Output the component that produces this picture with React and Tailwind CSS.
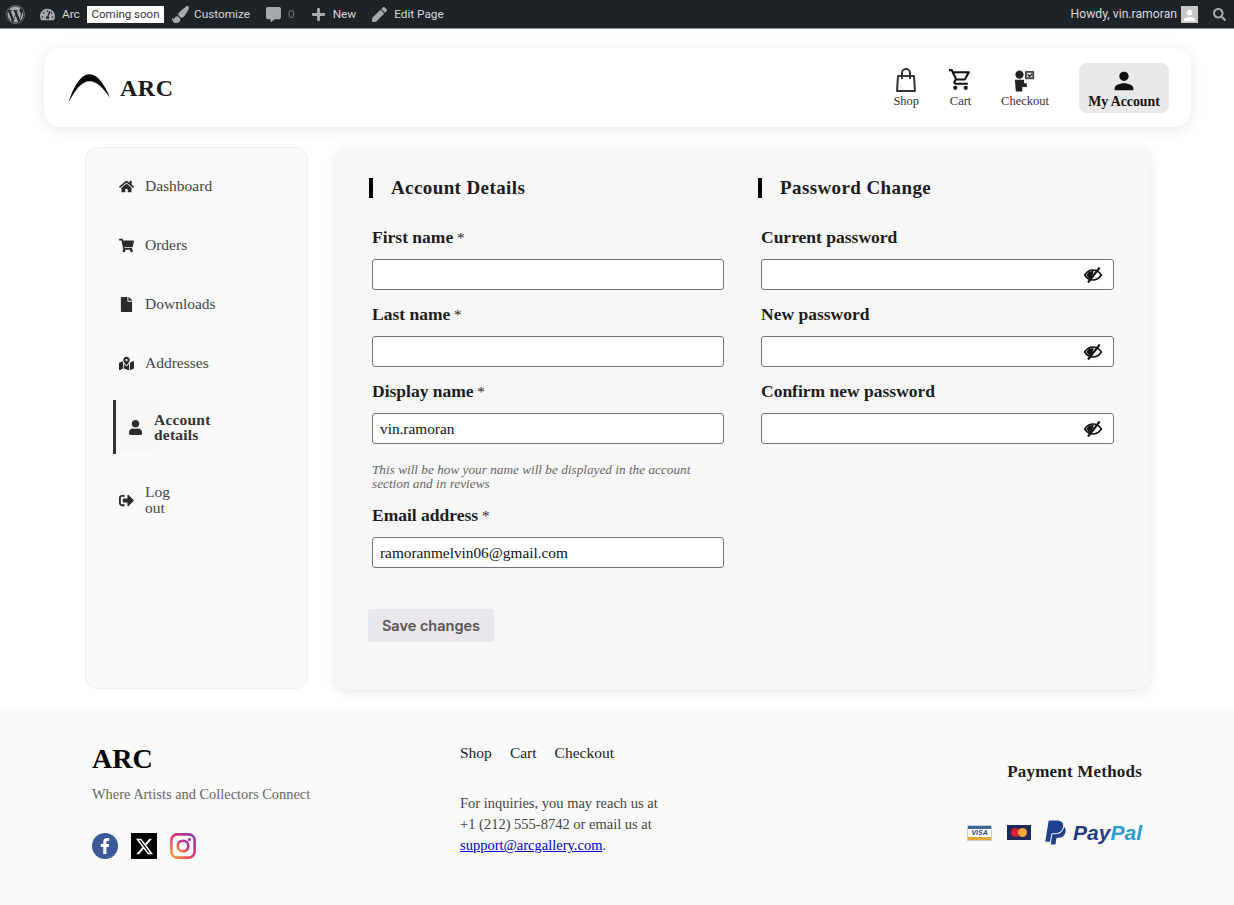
import React from "react";
import { FaWordpress, FaTachometerAlt, FaPaintBrush, FaCommentAlt, FaPlus, FaPen, FaSearch, FaHome, FaShoppingCart, FaFile, FaMapMarkedAlt, FaUser, FaSignOutAlt, FaFacebookF, FaPaypal } from "react-icons/fa";
import { FaXTwitter } from "react-icons/fa6";
import { MdPerson, MdOutlineShoppingCart } from "react-icons/md";

const serif = "font-['Liberation_Serif',serif]";

function BagIcon() {
  return (
    <svg viewBox="0 0 20 24" className="w-[20px] h-[24px]" fill="none" stroke="#333" strokeWidth="2">
      <path d="M2 8h16l1 15H1z" strokeLinejoin="round" />
      <path d="M6 11V5a4 4 0 0 1 8 0v6" />
    </svg>
  );
}

function CheckoutIcon() {
  return (
    <svg viewBox="0 0 24 24" className="w-[22px] h-[22px]" fill="#222">
      <circle cx="6" cy="5" r="4.5" />
      <path d="M1 10.5h10v4h3v4H9v5H2z" />
      <rect x="12" y="1" width="10" height="9" rx="1" fill="#444" />
      <rect x="14" y="3" width="6" height="5" fill="#ddd" />
      <path d="M15 5l2 2 3-3" fill="none" stroke="#222" strokeWidth="1.5" />
    </svg>
  );
}

function EyeOff() {
  return (
    <svg viewBox="0 0 24 24" className="w-[20px] h-[20px]" fill="none" stroke="#111" strokeWidth="2">
      <path d="M2 12s4-6 10-6 10 6 10 6-4 6-10 6S2 12 2 12z" />
      <path d="M7 8l-3 4 3 4 3 1 3-10z" fill="#111" stroke="none" />
      <path d="M20 3L6 21" strokeWidth="2.5" />
    </svg>
  );
}

function AdminItem({ icon, children }) {
  return (
    <div className="flex items-center gap-[7px] text-[#d8dadc]">
      <span className="text-[#a7aaad] text-[15px]">{icon}</span>
      {children}
    </div>
  );
}

function AdminBar() {
  return (
    <div className="h-[29px] pt-[1px] bg-[#1d2327] border-b border-[#8a8d90] flex items-center justify-between pl-[6px] pr-[8px] text-[11.8px] font-['Roboto',sans-serif]">
      <div className="flex items-center">
        <FaWordpress className="text-[#a7aaad] text-[19px] mr-[15px]" />
        <FaTachometerAlt className="text-[#a7aaad] text-[15px] mr-[7px]" />
        <span className="text-[#d8dadc] mr-[7px] w-[18px]">Arc</span>
        <span className="bg-white text-[#333] w-[77px] text-center h-[17px] leading-[17px] mr-[8px] text-[11.5px]">Coming soon</span>
        <div className="flex items-center gap-[16px]">
          <AdminItem icon={<FaPaintBrush className="text-[17px] -mr-[2px]" />}>Customize</AdminItem>
          <AdminItem icon={<FaCommentAlt />}><span className="text-[#72777c]">0</span></AdminItem>
          <AdminItem icon={<FaPlus />}>New</AdminItem>
          <AdminItem icon={<FaPen />}>Edit Page</AdminItem>
        </div>
      </div>
      <div className="flex items-center text-[#d8dadc]">
        <span className="mr-[4px] text-[12.2px]">Howdy, vin.ramoran</span>
        <span className="w-[17px] h-[17px] bg-[#c7c7c7] mr-[15px] flex items-end justify-center overflow-hidden">
          <MdPerson className="text-white text-[19px] -mb-[2px]" />
        </span>
        <FaSearch className="text-[#a7aaad] text-[13px]" />
      </div>
    </div>
  );
}

function NavItem({ icon, label, active }) {
  return (
    <div className={`flex flex-col items-center justify-center rounded-lg ${active ? "bg-[#e9e9e9] w-[90px] h-[50px] font-bold text-[13.8px] text-[#111]" : "text-[#333] text-[12.5px]"}`}>
      <div className="h-[26px] flex items-end justify-center">{icon}</div>
      <div className="leading-[17px] mt-[1px]">{label}</div>
    </div>
  );
}

function Header() {
  return (
    <div className="mx-[44px] mt-[19px] w-[1147px] h-[79px] bg-white rounded-2xl shadow-[0_2px_14px_rgba(0,0,0,0.1)] flex items-center justify-between pl-[24px] pr-[22px]">
      <div className="flex items-center gap-[9px]">
        <svg viewBox="0 0 44 30" className="w-[43px] h-[30px] mt-[1px]">
          <path d="M1 29C5 15 13 1 22 1c9 0 16 12 21 24C36 15 30 8 22 8 14 8 8 16 1 29z" fill="#000" />
        </svg>
        <span className="text-[24px] font-bold text-[#1a1a1a] tracking-[0.5px]">ARC</span>
      </div>
      <div className="flex items-center">
        <div className="mr-[29px]"><NavItem icon={<BagIcon />} label="Shop" /></div>
        <div className="mr-[28px]"><NavItem icon={<MdOutlineShoppingCart className="text-[25px] text-[#111]" />} label="Cart" /></div>
        <div className="mr-[30px]"><NavItem icon={<CheckoutIcon />} label="Checkout" /></div>
        <NavItem icon={<MdPerson className="text-[28px] text-[#111] -mb-[3px]" />} label="My Account" active />
      </div>
    </div>
  );
}

function SideLink({ icon, children }) {
  return (
    <div className="flex items-center pl-[33px] text-[#444] text-[15.5px] leading-[16px]">
      <span className="w-[26px] text-[15px] text-[#2b2b2b] flex">{icon}</span>
      <span>{children}</span>
    </div>
  );
}

function Sidebar() {
  return (
    <div className="w-[223px] h-[542px] bg-[#fafafa] border border-[#efefef] rounded-xl pt-[30px] shrink-0">
      <div className="flex flex-col gap-[43px]">
        <SideLink icon={<FaHome />}>Dashboard</SideLink>
        <SideLink icon={<FaShoppingCart />}>Orders</SideLink>
        <SideLink icon={<FaFile />}>Downloads</SideLink>
        <SideLink icon={<FaMapMarkedAlt />}>Addresses</SideLink>
      </div>
      <div className="ml-[27px] mt-[29px] h-[54px] w-[46px] border-l-[3px] border-[#333] bg-[#f7f7f7] flex items-center relative">
        <FaUser className="text-[15px] text-[#2b2b2b] ml-[12px] shrink-0" />
        <span className="absolute left-[38px] font-bold text-[#333] text-[15.5px] leading-[15px] tracking-[0.2px]">Account<br />details</span>
      </div>
      <div className="mt-[30px]">
        <SideLink icon={<FaSignOutAlt />}>Log<br />out</SideLink>
      </div>
    </div>
  );
}

function Field({ label, required, value, eye, hint }) {
  return (
    <div>
      <div className="text-[17.5px] font-bold text-[#1c1c1c] leading-[22px] mb-[11px] pl-[3px]">
        {label}
        {required && <span className="font-normal text-[15px] leading-none"> *</span>}
      </div>
      <div className={`ml-[3px] h-[31px] pt-[1px] bg-white border border-[#77707a] rounded-[3px] flex items-center justify-between px-[7px] text-[15.3px] text-[#111] ${eye ? "w-[353px]" : "w-[352px]"}`}>
        <span>{value}</span>
        {eye && <span className="mr-[3px]"><EyeOff /></span>}
      </div>
      {hint && <div className="pl-[3px] mt-[19px] w-[345px] text-[13.25px] italic leading-[14px] text-[#666]">{hint}</div>}
    </div>
  );
}

function Heading({ children }) {
  return (
    <div className="border-l-[4px] border-black pl-[18px] h-[20px] flex items-center text-[19px] font-bold text-[#1c1c1c] tracking-[0.4px] mb-[28px]">
      {children}
    </div>
  );
}

function Form() {
  return (
    <div className="w-[815px] h-[542px] bg-[#f7f7f7] rounded-xl shadow-[0_3px_12px_rgba(0,0,0,0.1)] ml-[27px] pl-[34px] pt-[31px]">
      <div className="flex gap-[32px]">
        <div className="w-[357px]">
          <Heading>Account Details</Heading>
          <div className="flex flex-col gap-[13px]">
            <Field label="First name" required />
            <Field label="Last name" required />
            <Field label="Display name" required value="vin.ramoran" hint="This will be how your name will be displayed in the account section and in reviews" />
            <Field label="Email address" required value="ramoranmelvin06@gmail.com" />
          </div>
          <button className="-ml-[1px] mt-[41px] w-[126px] h-[33px] bg-[#e9e6ec] rounded-[2px] text-[14.5px] font-semibold text-[#555] font-['Inter',sans-serif]">Save changes</button>
        </div>
        <div className="w-[357px]">
          <Heading>Password Change</Heading>
          <div className="flex flex-col gap-[13px]">
            <Field label="Current password" eye />
            <Field label="New password" eye />
            <Field label="Confirm new password" eye />
          </div>
        </div>
      </div>
    </div>
  );
}

function Footer() {
  return (
    <div className="mt-[19px] h-[197px] bg-[#fafafa] flex pl-[92px] pr-[92px] relative">
      <div className="w-[368px] pt-[33px]">
        <div className="text-[28px] font-bold text-black leading-[36px]">ARC</div>
        <div className="text-[14.4px] text-[#666] mt-[8px] leading-[18px]">Where Artists and Collectors Connect</div>
        <div className="flex gap-[13px] mt-[30px]">
          <span className="w-[26px] h-[26px] rounded-full bg-[#3b5998] flex items-center justify-center"><FaFacebookF className="text-[16px] text-white" /></span>
          <span className="w-[26px] h-[26px] bg-black flex items-center justify-center"><FaXTwitter className="text-[19px] text-white" /></span>
          <svg viewBox="0 32 448 448" className="w-[26px] h-[26px]">
            <defs>
              <linearGradient id="ig" x1="0" y1="1" x2="1" y2="0">
                <stop offset="0" stopColor="#f9a13b" />
                <stop offset="0.5" stopColor="#e1306c" />
                <stop offset="1" stopColor="#8a3ab9" />
              </linearGradient>
            </defs>
            <rect x="24" y="56" width="400" height="400" rx="100" fill="none" stroke="url(#ig)" strokeWidth="44" />
            <circle cx="224" cy="256" r="92" fill="none" stroke="url(#ig)" strokeWidth="44" />
            <circle cx="335" cy="145" r="28" fill="#a43ab0" />
          </svg>
        </div>
      </div>
      <div className="pt-[36px] text-[15.5px] text-[#333] w-[400px]">
        <div className="flex gap-[18px] leading-[18px] text-[#222]">
          <span>Shop</span><span>Cart</span><span>Checkout</span>
        </div>
        <div className="mt-[31px] text-[14.5px] leading-[21px] text-[#444]">
          For inquiries, you may reach us at<br />
          +1 (212) 555-8742 or email us at<br />
          <span className="text-[#0000cc] underline">support@arcgallery.com</span>.
        </div>
      </div>
      <div className="flex-1 flex flex-col items-end pt-[55px]">
        <div className="text-[17px] font-bold text-[#1c1c1c] leading-[18px] tracking-[0.2px]">Payment Methods</div>
        <div className="flex items-center mt-[38px]">
          <div className="w-[25px] h-[16px] bg-white border border-[#ccc] flex flex-col mr-[15px] overflow-hidden">
            <div className="h-[3px] bg-[#3a6a9e]" />
            <div className="flex-1 text-[7px] leading-[8px] italic font-bold text-[#2a4a7f] text-center font-['Liberation_Sans',sans-serif]">VISA</div>
            <div className="h-[3px] bg-[#e3a83a]" />
          </div>
          <div className="w-[24px] h-[15px] bg-[#1f2a5a] flex items-center justify-center mr-[11px]">
            <span className="w-[9px] h-[9px] rounded-full bg-[#d5222d]" />
            <span className="w-[9px] h-[9px] rounded-full bg-[#f0a63a] -ml-[2px]" />
          </div>
          <FaPaypal className="text-[27px] text-[#1f3f91] mr-[4px]" />
          <span className="text-[21px] font-bold italic font-['Liberation_Sans',sans-serif] leading-none">
            <span className="text-[#253b80]">Pay</span><span className="text-[#2a9bd8]">Pal</span>
          </span>
        </div>
      </div>
    </div>
  );
}

export default function App() {
  return (
    <div className={`${serif} w-[1234px] h-[905px] bg-white overflow-hidden`}>
      <AdminBar />
      <Header />
      <div className="flex ml-[85px] mt-[20px]">
        <Sidebar />
        <Form />
      </div>
      <Footer />
    </div>
  );
}
